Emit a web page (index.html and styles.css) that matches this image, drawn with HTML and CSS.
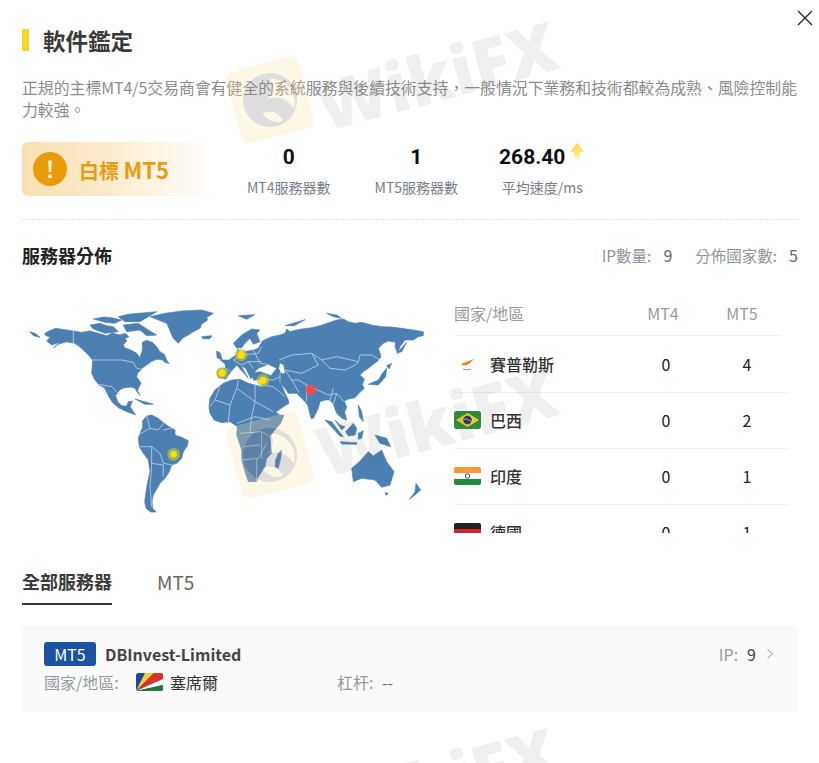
FILE: index.html
```html
<!DOCTYPE html>
<html lang="zh-Hant">
<head>
<meta charset="utf-8">
<title>軟件鑑定</title>
<link rel="stylesheet" href="styles.css">
</head>
<body>
<main class="page">
  <button class="close" aria-label="close">
    <svg viewBox="0 0 16 16" width="16" height="16"><path d="M1 1L15 15M15 1L1 15" stroke="#222" stroke-width="1.3" fill="none"/></svg>
  </button>
  <h1 class="title">軟件鑑定</h1>
  <p class="desc">正規的主標MT4/5交易商會有健全的系統服務與後續技術支持，一般情況下業務和技術都較為成熟、風險控制能力較強。</p>

  <section class="summary">
    <div class="grade">
      <span class="grade-icon">
        <svg viewBox="0 0 34 34" width="34" height="34"><circle cx="17" cy="17" r="17" fill="#e89c0c"/><path d="M15.2 8.5h3.600l-.6 11.500h-2.400zM15.2 22.500h3.600v3.500h-3.600z" fill="#fff3dc"/></svg>
      </span>
      <span class="grade-text">白標 <span class="grade-latin">MT5</span></span>
    </div>
    <div class="stat stat-a"><b>0</b><span>MT4服務器數</span></div>
    <div class="stat stat-b"><b>1</b><span>MT5服務器數</span></div>
    <div class="stat stat-c">
      <b>268.40<svg class="up" viewBox="0 0 16 22" width="16" height="22"><defs><linearGradient id="upg" x1="0" y1="0" x2="0" y2="1"><stop offset="0" stop-color="#fbd92c"/><stop offset=".5" stop-color="#fde77a"/><stop offset="1" stop-color="#fff" stop-opacity=".2"/></linearGradient></defs><path d="M8 0L15 9H11V21H5V9H1Z" fill="url(#upg)"/></svg></b>
      <span>平均速度/ms</span>
    </div>
  </section>

  <header class="dist-head">
    <h2>服務器分佈</h2>
    <div class="dist-meta"><span>IP數量:</span><em>9</em><span class="gap">分佈國家數:</span><em>5</em></div>
  </header>

  <section class="dist">
    <svg class="map" viewBox="0 0 1290 750" width="430" height="250" aria-label="world map">
      <g class="land">
        <g transform="translate(45 45)">
          <path d="M60 85L72 78L92 70L120 74L145 78L170 82L195 78L220 85L245 92L262 84L285 90L300 85L312 95L300 100L305 108L296 118L298 128L318 135L335 145L345 158L352 135L352 112L365 106L382 112L395 125L405 140L418 148L425 165L432 176L420 172L412 165L395 163L378 170L360 183L345 197L338 205L335 215L342 225L348 235L340 250L338 258L345 272L337 262L330 250L318 246L300 248L288 252L280 260L272 272L278 290L290 302L305 303L310 290L322 288L316 305L322 315L332 330L318 325L300 318L280 308L262 292L250 272L238 248L222 240L208 222L200 205L202 180L203 165L190 150L175 135L160 122L148 115L125 110L100 118L85 128L105 112L80 120L65 108L75 97L60 90Z"/>
          <path d="M15 80L30 85L45 97L25 92Z"/>
          <path d="M205 42L235 36L260 38L290 45L270 55L240 52Z"/>
          <path d="M195 60L225 55L245 62L265 65L280 80L240 85L205 72Z"/>
          <path d="M280 35L310 28L340 25L395 20L370 35L345 50L300 50Z"/>
          <path d="M295 60L340 55L370 75L395 90L365 92L345 75L305 80Z"/>
          <path d="M375 35L420 25L470 18L530 15L565 25L545 38L548 45L530 58L525 70L505 80L490 90L472 100L460 115L445 100L440 90L432 70L425 55Z"/>
          <path d="M530 95L560 92L555 100L535 102Z"/>
          <path d="M330 282L365 292L385 298L360 298Z"/>
        </g>
        <g transform="translate(360 330)">
          <path d="M50 48L65 45L85 55L100 68L120 82L135 90L135 105L155 112L175 122L172 138L160 155L155 175L140 190L125 195L118 215L105 235L90 250L82 265L70 285L66 305L68 325L78 336L62 336L48 325L44 305L48 275L52 250L60 215L55 180L40 160L28 140L25 115L30 100L38 82L38 62Z"/>
        </g>
        <path d="M600 325L615 300L640 280L665 270L690 268L715 280L735 285L770 295L772 310L785 345L795 365L810 375L822 376L812 400L790 425L780 440L782 470L785 490L770 505L765 530L745 560L740 575L715 575L705 545L695 510L695 480L680 435L682 410L660 395L635 398L612 390L600 370L597 350Z"/>
        <path d="M805 490L815 480L812 505L805 535L795 530L797 510Z"/>
        <g transform="translate(585 45)">
          <path d="M36 200L42 192L62 190L60 177L46 165L72 165L95 148L98 130L108 142L145 135L160 130L172 108L200 95L225 90L240 85L245 72L255 80L270 76L290 72L320 68L345 62L375 52L395 45L415 42L430 50L450 55L470 52L500 60L530 65L560 66L590 70L625 75L655 80L655 92L640 95L625 105L600 105L585 125L578 145L570 125L572 112L550 108L535 115L520 130L525 145L528 155L518 168L505 178L490 190L475 200L465 210L478 222L472 240L478 250L465 262L450 278L430 282L418 288L425 305L420 320L405 335L395 325L390 312L385 298L375 285L360 285L345 290L340 310L325 340L318 340L308 300L300 290L285 275L275 265L250 265L240 250L228 235L240 265L250 285L252 295L235 305L212 322L205 325L195 300L172 250L170 222L146 226L138 205L165 200L198 212L215 190L190 178L160 190L145 205L138 222L122 190L108 182L130 220L95 180L78 200L62 222L40 218Z"/>
          <path d="M85 115L110 90L140 72L165 75L155 85L165 110L145 118L135 100L120 115L110 128L95 128Z"/>
          <path d="M35 138L45 143L52 165L36 158Z"/>
          <path d="M0 96L20 94L10 102Z"/>
          <path d="M100 32L150 29L125 43Z"/>
          <path d="M240 62L300 44L268 62Z"/>
          <path d="M365 25L395 30L410 40L385 35Z"/>
          <path d="M490 238L520 225L532 205L545 190L542 215L520 240Z"/>
          <path d="M575 145L605 112L590 140Z"/>
          <path d="M545 182L560 175L552 192Z"/>
          <path d="M395 300L420 325L425 345L410 340L400 320Z"/>
        </g>
        <g transform="translate(870 330)">
          <path d="M75 60L95 65L130 110L120 108Z"/>
          <path d="M120 125L170 128L170 133L125 132Z"/>
          <path d="M137 95L160 70L170 85L165 105L145 108Z"/>
          <path d="M175 100L190 92L185 115L175 118Z"/>
          <path d="M225 105L260 115L272 140L240 130Z"/>
          <path d="M175 15L185 35L190 65L178 50Z"/>
          <path d="M155 205L178 185L205 155L220 168L245 150L260 185L282 215L270 255L245 262L225 240L185 235L160 245Z"/>
          <path d="M255 278L265 280L258 286Z"/>
          <path d="M348 250L362 270L345 285L328 298L345 275Z"/>
          <path d="M105 60L120 75L135 80L125 90Z"/>
        </g>
      </g>
      <g class="sea" transform="translate(585 45)">
        <path d="M225 175L235 180L240 205L228 205L222 190Z"/>
      </g>
      <g class="borders">
        <g transform="translate(45 45)">
          <path d="M203 165L290 165L325 172L335 190L350 192L385 170"/>
          <path d="M145 76V115L175 135"/>
          <path d="M218 238L260 245L285 270M228 243L245 278"/>
        </g>
        <g transform="translate(360 330)">
          <path d="M50 48L60 85L50 90L25 105M60 85L85 90L100 70M100 90L125 85"/>
          <path d="M30 140L65 140L90 160L100 190L125 195M65 140V195L60 260L65 320M65 190L100 195L100 230"/>
        </g>
        <path d="M630 290L615 330L600 350M685 270L680 295L735 335L790 365M735 285V335L725 380M615 330L660 345L655 395M660 345L680 295M680 400L735 380L780 390M690 430L755 425L780 440M695 510L745 505L770 460M700 470L750 465M725 380L720 425M755 425V505M740 505V575"/>
        <g transform="translate(585 45)">
          <path d="M62 190L78 200M85 165L110 180L130 170L145 190M98 130L110 150L85 165M110 150L160 145L170 125M145 135L165 175L190 178M130 170L170 170"/>
          <path d="M222 165L260 150L320 145L350 165L395 155L460 170L465 150L500 150L525 165"/>
          <path d="M350 165L375 190L420 195L450 180L460 170"/>
          <path d="M240 195L290 205L320 190L340 180L320 145M240 195L260 225L280 225L305 240L370 270L395 265L385 298"/>
          <path d="M225 205V232M170 222L205 225L225 215M172 240L205 245L240 275M260 225L282 262M305 240V290M395 265L418 290M375 285L385 250"/>
        </g>
      </g>
      <g class="pin">
        <circle class="halo" cx="693" cy="195" r="19"/><circle class="core" cx="693" cy="195" r="11"/>
        <circle class="halo" cx="636" cy="249" r="18"/><circle class="core" cx="636" cy="249" r="11"/>
        <circle class="halo" cx="759" cy="271" r="19"/><circle class="core" cx="759" cy="271" r="11"/>
        <circle class="halo" cx="491" cy="493" r="19"/><circle class="core" cx="491" cy="493" r="10"/>
        <circle class="halo-red" cx="902" cy="300" r="17"/><circle class="core-red" cx="902" cy="300" r="11"/>
      </g>
    </svg>

    <div class="table">
      <div class="thead"><span>國家/地區</span><span class="num">MT4</span><span class="num">MT5</span></div>
      <div class="trow">
        <span class="country">
          <svg class="flag flag-light" viewBox="0 0 27 18"><rect width="27" height="18" rx="2" fill="#fff"/><path d="M7 9L12 7L20 4L16 8L13 10L9 10.500Z" fill="#e4851a"/><path d="M9 14Q13 15.500 17 14" stroke="#8fae86" stroke-width="1.200" fill="none"/></svg>
          賽普勒斯</span>
        <span class="num">0</span><span class="num">4</span>
      </div>
      <div class="trow">
        <span class="country">
          <svg class="flag" viewBox="0 0 27 18"><rect width="27" height="18" rx="2" fill="#2c8c3c"/><path d="M13.500 2L25 9L13.500 16L2 9Z" fill="#f4cf1f"/><circle cx="13.500" cy="9" r="4.300" fill="#23307a"/><path d="M9.500 8Q13.500 7.500 17.500 10.500" stroke="#e8e8e8" stroke-width=".7" fill="none"/></svg>
          巴西</span>
        <span class="num">0</span><span class="num">2</span>
      </div>
      <div class="trow">
        <span class="country">
          <svg class="flag" viewBox="0 0 27 18"><rect width="27" height="6" fill="#f6973c"/><rect y="6" width="27" height="6" fill="#fff"/><rect y="12" width="27" height="6" fill="#1f8a3c"/><circle cx="13.500" cy="9" r="2.200" fill="none" stroke="#2b3a86"/></svg>
          印度</span>
        <span class="num">0</span><span class="num">1</span>
      </div>
      <div class="trow">
        <span class="country">
          <svg class="flag" viewBox="0 0 27 18"><rect width="27" height="6" fill="#222"/><rect y="6" width="27" height="6" fill="#d3222a"/><rect y="12" width="27" height="6" fill="#f8ce10"/></svg>
          德國</span>
        <span class="num">0</span><span class="num">1</span>
      </div>
    </div>
  </section>

  <nav class="tabs">
    <span class="tab active">全部服務器</span>
    <span class="tab tab-plain">MT5</span>
  </nav>

  <article class="card">
    <div class="card-top">
      <span class="tag">MT5</span>
      <strong class="server">DBInvest-Limited</strong>
      <span class="ip"><span class="muted">IP:</span><em>9</em>
        <svg viewBox="0 0 8 12" width="8" height="12"><path d="M1.500 1.500L6.500 6L1.500 10.500" fill="none" stroke="#999" stroke-width="1"/></svg>
      </span>
    </div>
    <div class="card-bottom">
      <span class="muted label">國家/地區:</span>
      <svg class="flag" viewBox="0 0 27 18"><rect width="27" height="18" rx="2" fill="#1a4a9a"/><path d="M0 18L9 0H18Z" fill="#f8cd40"/><path d="M0 18L18 0H27V6Z" fill="#d8322c"/><path d="M0 18L27 6V12Z" fill="#fff"/><path d="M0 18L27 12V18Z" fill="#1d7a3a"/></svg>
      <span class="place">塞席爾</span>
      <span class="muted lev">杠杆:</span>
      <span class="dash">--</span>
    </div>
  </article>

  <div class="wm-layer" aria-hidden="true">
    <div class="wm wm-1"><svg class="wm-logo" viewBox="0 0 90 90" width="90" height="90"><rect x="8" y="8" width="74" height="74" rx="8" fill="#f8e3a8"/><circle cx="45" cy="45" r="27" fill="#8a8a8a"/><path d="M50 24C66 28 74 44 66 60C62 48 54 42 42 44C50 38 54 32 50 24ZM34 56C42 54 50 58 52 68C44 70 38 64 34 56Z" fill="#f8e3a8"/></svg><span>WikiFX</span></div>
    <div class="wm wm-2"><svg class="wm-logo" viewBox="0 0 90 90" width="90" height="90"><rect x="8" y="8" width="74" height="74" rx="8" fill="#f8e3a8"/><circle cx="45" cy="45" r="27" fill="#8a8a8a"/><path d="M50 24C66 28 74 44 66 60C62 48 54 42 42 44C50 38 54 32 50 24ZM34 56C42 54 50 58 52 68C44 70 38 64 34 56Z" fill="#f8e3a8"/></svg><span>WikiFX</span></div>
    <div class="wm wm-3"><span>WikiFX</span></div>
  </div>
</main>
</body>
</html>
```

FILE: styles.css
```css
* { box-sizing: border-box; }
html, body { margin: 0; padding: 0; background: #fff; }
body {
  width: 819px;
  height: 763px;
  overflow: hidden;
  font-family: "Noto Sans CJK TC", "Noto Sans", "Liberation Sans", sans-serif;
  color: #333;
}
.page {
  position: relative;
  width: 819px;
  height: 763px;
  padding: 29px 21px 0 22px;
  overflow: hidden;
}
.close {
  position: absolute;
  top: 10px;
  right: 6px;
  width: 16px;
  height: 16px;
  padding: 0;
  border: 0;
  background: none;
}
.close svg { display: block; }
.title {
  margin: 0;
  height: 22px;
  padding-left: 14px;
  border-left: 7px solid #fdd22a;
  border-radius: 1px;
  font-size: 22.5px;
  line-height: 22px;
  font-weight: 700;
  color: #3a3a3a;
}
.desc {
  margin: 26px 0 0;
  font-size: 15.85px;
  line-height: 22px;
  color: #8b8b8b;
}
.summary {
  display: flex;
  align-items: flex-start;
  margin-top: 21px;
  height: 78px;
  border-bottom: 1px dashed #e4e4e4;
}
.grade {
  display: flex;
  align-items: center;
  width: 190px;
  height: 54px;
  padding-left: 11px;
  border-radius: 6px;
  background: linear-gradient(90deg, #f8e0b0 0%, #fbebcd 45%, #ffffff 100%);
}
.grade-icon { display: flex; }
.grade-text {
  margin-left: 12px;
  font-size: 20px;
  font-weight: 700;
  color: #e89c10;
  white-space: nowrap;
}
.grade-latin { font-size: 22px; }
.stat {
  display: flex;
  flex-direction: column;
  align-items: center;
  white-space: nowrap;
}
.stat b {
  display: flex;
  align-items: center;
  height: 30px;
  font-family: Roboto, "Liberation Sans", sans-serif;
  font-size: 21px;
  font-weight: 700;
  color: #111;
}
.stat span {
  margin-top: 0;
  font-size: 14px;
  line-height: 30px;
  color: #787e87;
}
.stat-a { margin-left: 35px; }
.stat-b { margin-left: 44px; }
.stat-c { margin-left: 45px; }
.stat-c b { margin-left: -4px; }
.stat-c span { margin-left: -4px; }
.up { margin-left: 4px; margin-top: -6px; }
.dist-head {
  display: flex;
  justify-content: space-between;
  align-items: center;
  margin-top: 22px;
  height: 26px;
}
.dist-head h2 {
  margin: 0;
  font-size: 18px;
  font-weight: 700;
  color: #222;
}
.dist-meta {
  display: flex;
  align-items: center;
  font-size: 15.5px;
  color: #8e949c;
}
.dist-meta em {
  margin-left: 12px;
  font-style: normal;
  font-size: 16px;
  color: #666;
}
.dist-meta .gap { margin-left: 23px; }
.dist {
  display: flex;
  height: 247px;
  margin-top: 22px;
  align-items: flex-start;
}
.map {
  display: block;
  flex: none;
  margin-left: -12px;
}
.land path {
  fill: #4c80b2;
  stroke: #4c80b2;
  stroke-width: 2;
  stroke-linejoin: round;
}
.sea path { fill: #fff; }
.borders path {
  fill: none;
  stroke: #c0d5ea;
  stroke-width: 2.4;
  stroke-linejoin: round;
}
.halo { fill: #c3c92c; opacity: .65; }
.core { fill: #f8df10; }
.halo-red { fill: #e0555c; opacity: .75; }
.core-red { fill: #ee4a50; }
.table {
  width: 334px;
  height: 243px;
  margin-left: 14px;
  overflow: hidden;
  flex: none;
}
.thead {
  display: grid;
  grid-template-columns: 169px 80px 78px;
  align-items: center;
  width: 327px;
  height: 46px;
  margin-bottom: 1px;
  border-bottom: 1px solid #f0f0f0;
  font-size: 16px;
  color: #9a9a9a;
}
.trow {
  display: grid;
  grid-template-columns: 172px 80px 82px;
  align-items: center;
  height: 56px;
  padding-bottom: 2px;
  border-bottom: 1px solid #f0f0f0;
  font-size: 16px;
  color: #222;
}
.num { text-align: center; }
.country {
  display: flex;
  align-items: center;
  gap: 9px;
  font-weight: 500;
  color: #333;
}
.flag {
  display: block;
  flex: none;
  width: 27px;
  height: 18px;
  border-radius: 2px;
}
.flag-light { box-shadow: 0 0 1px #ddd; }
.tabs {
  display: flex;
  gap: 45px;
  height: 41px;
  margin-top: 28px;
  font-size: 18px;
  line-height: 33px;
  color: #666;
}
.tab { display: block; height: 40px; }
.tab-plain { font-size: 19px; }
.tab.active {
  border-bottom: 2px solid #333;
  font-weight: 700;
  color: #3a3a3a;
}
.card {
  margin-top: 20px;
  height: 86px;
  padding: 16px 22px 0;
  background: #fafafa;
}
.card-top {
  display: flex;
  align-items: center;
  height: 24px;
}
.tag {
  width: 52px;
  height: 24px;
  border-radius: 3px;
  background: #1b52a2;
  color: #fff;
  font-size: 16px;
  line-height: 24px;
  text-align: center;
}
.server {
  margin-left: 9px;
  font-size: 16px;
  font-weight: 700;
  color: #444;
}
.ip {
  display: flex;
  align-items: center;
  margin-left: auto;
  margin-right: 2px;
  font-size: 16px;
}
.ip em {
  margin-left: 9px;
  margin-right: 10px;
  font-style: normal;
  color: #444;
}
.muted { color: #95999f; }
.card-bottom {
  display: flex;
  align-items: center;
  height: 26px;
  margin-top: 3px;
  font-size: 16px;
}
.label { width: 92px; }
.place { margin-left: 7px; width: 167px; color: #333; }
.lev { width: 45px; }
.dash { color: #666; }
.wm-layer {
  position: absolute;
  inset: 0;
  pointer-events: none;
}
.wm { position: absolute; left: 0; width: 600px; height: 140px; }
.wm span {
  position: absolute;
  left: 314px;
  top: 5px;
  font-family: "Open Sans", sans-serif;
  font-size: 68px;
  font-weight: 800;
  line-height: 90px;
  color: rgba(110, 100, 100, .10);
  transform: rotate(-15deg);
  white-space: nowrap;
}
.wm-logo {
  position: absolute;
  left: 225px;
  top: 30px;
  opacity: .28;
  transform: rotate(-15deg);
}
.wm-1 { top: 25px; }
.wm-2 { top: 380px; }
.wm-2 span { top: -4px; }
.wm-3 { top: 731px; }
```
